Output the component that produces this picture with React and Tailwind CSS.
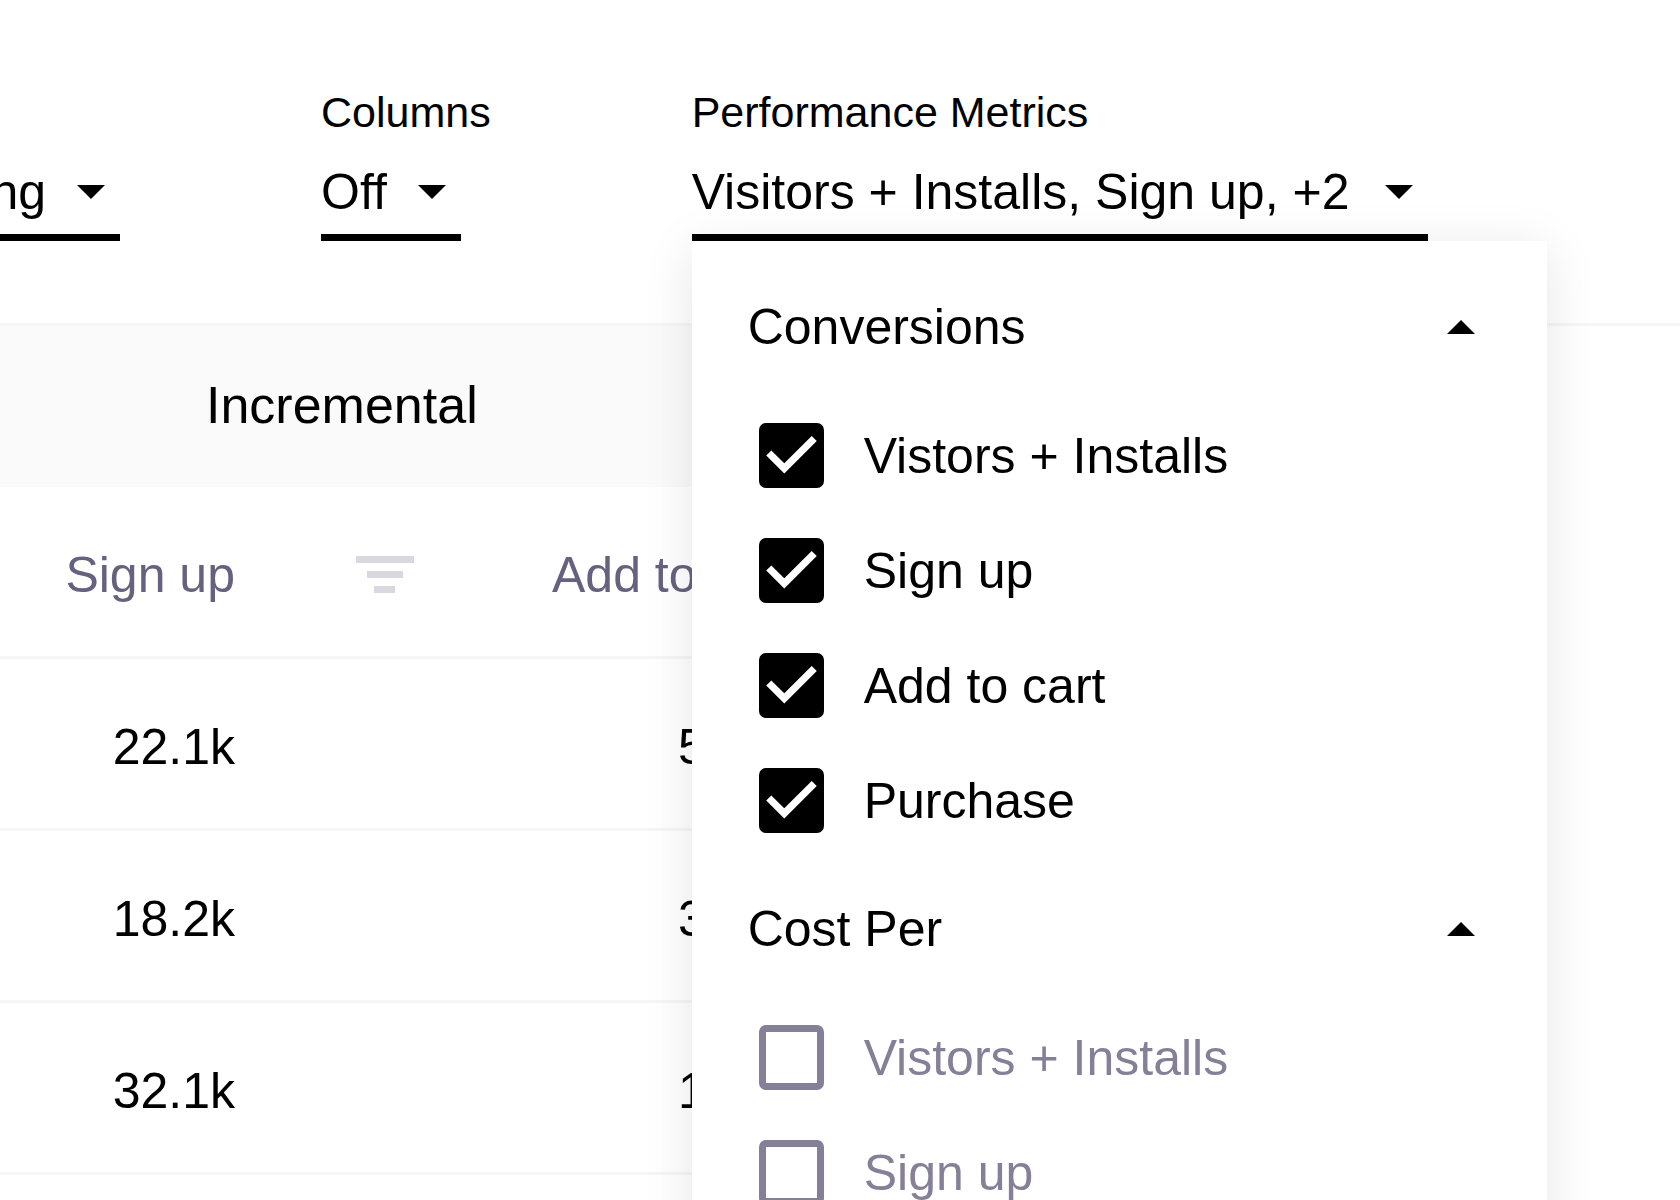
import { useState } from "react";

const METRICS = ["Vistors + Installs", "Sign up", "Add to cart", "Purchase"];

const ROWS = [
  ["22.1k", "5.12k"],
  ["18.2k", "3.24k"],
  ["32.1k", "12.1k"],
];

function Triangle({ up = false, className = "" }) {
  return (
    <svg
      width="28"
      height="14"
      viewBox="0 0 28 14"
      fill="currentColor"
      aria-hidden="true"
      className={`shrink-0 ${className}`}
    >
      <path d={up ? "M0 14 14 0 28 14Z" : "M0 0H28L14 14Z"} />
    </svg>
  );
}

function SelectField({ id, label, value }) {
  return (
    <div className="flex shrink-0 flex-col items-start">
      {label ? (
        <label htmlFor={id} className="mb-6 text-[43px] leading-[52px]">
          {label}
        </label>
      ) : (
        <span className="mb-6 h-[52px]" />
      )}
      <div className="grid items-center border-b-[7px] border-black pb-3">
        <select
          id={id}
          aria-label={label || "Attribution"}
          className="col-start-1 row-start-1 h-[60px] appearance-none bg-transparent pr-[74px] leading-[60px] outline-none [field-sizing:content]"
        >
          <option>{value}</option>
        </select>
        <Triangle className="pointer-events-none col-start-1 row-start-1 mr-[15px] justify-self-end" />
      </div>
    </div>
  );
}

function MetricCheckbox({ label, checked, onChange }) {
  return (
    <label
      className={`flex h-[115px] items-center gap-10 pl-[67px] ${
        checked ? "text-black" : "text-[#857f97]"
      }`}
    >
      <span className="grid shrink-0">
        <input
          type="checkbox"
          checked={checked}
          onChange={onChange}
          className="col-start-1 row-start-1 size-[65px] appearance-none rounded-[7px] border-[7px] border-current checked:bg-black"
        />
        {checked && (
          <svg
            viewBox="3 3 18 18"
            fill="white"
            aria-hidden="true"
            className="pointer-events-none col-start-1 row-start-1 size-[65px]"
          >
            <path d="M10 17l-5-5 1.41-1.41L10 14.17l7.59-7.59L19 8l-9 9z" />
          </svg>
        )}
      </span>
      {label}
    </label>
  );
}

function MetricSection({ title, initial }) {
  const [open, setOpen] = useState(true);
  const [picked, setPicked] = useState(initial);
  const toggle = (name) =>
    setPicked((now) =>
      now.includes(name) ? now.filter((n) => n !== name) : [...now, name]
    );

  return (
    <section>
      <button
        type="button"
        aria-expanded={open}
        onClick={() => setOpen(!open)}
        className="flex h-[142px] w-full items-center justify-between pr-[72px] pl-14"
      >
        {title}
        <Triangle up={open} />
      </button>
      {open &&
        METRICS.map((name) => (
          <MetricCheckbox
            key={name}
            label={name}
            checked={picked.includes(name)}
            onChange={() => toggle(name)}
          />
        ))}
    </section>
  );
}

function MetricsField() {
  const [open, setOpen] = useState(true);
  return (
    <div className="flex shrink-0 flex-col items-start">
      <span id="metrics-label" className="mb-6 text-[43px] leading-[52px]">
        Performance Metrics
      </span>
      <div className="relative">
        <button
          type="button"
          aria-labelledby="metrics-label metrics-value"
          aria-expanded={open}
          onClick={() => setOpen(!open)}
          className="flex items-center gap-9 border-b-[7px] border-black pr-[15px] pb-3 leading-[60px] whitespace-nowrap"
        >
          <span id="metrics-value">Visitors + Installs, Sign up, +2</span>
          <Triangle />
        </button>
        {open && (
          <div className="absolute top-full left-0 z-10 w-[855px] bg-white pt-[15px] shadow-[0_8px_48px_rgba(0,0,0,0.1)]">
            <MetricSection title="Conversions" initial={METRICS} />
            <MetricSection title="Cost Per" initial={[]} />
          </div>
        )}
      </div>
    </div>
  );
}

function FilterIcon() {
  return (
    <svg width="58" height="37" viewBox="0 0 58 37" fill="#d9d8df" aria-hidden="true">
      <path d="M0 0H58V7H0ZM11 15H47V22H11ZM18 30H39V37H18Z" />
    </svg>
  );
}

function ResultsTable() {
  return (
    <table className="table-fixed border-separate border-spacing-0 whitespace-nowrap">
      <colgroup>
        <col className="w-[414px]" />
        <col className="w-[500px]" />
      </colgroup>
      <thead>
        <tr>
          <th
            colSpan={2}
            className="h-[161px] bg-[#fafafa] p-0 pb-1 pl-[206px] text-left text-[52px] leading-[60px] font-normal"
          >
            Incremental
          </th>
        </tr>
        <tr className="text-[#676180]">
          <th className="h-[172px] border-b-[3px] border-[#f6f6f7] p-0 pt-1.5 text-right font-normal">
            <span className="flex items-center justify-end gap-[121px]">
              Sign up
              <button type="button" aria-label="Sort by sign up">
                <FilterIcon />
              </button>
            </span>
          </th>
          <th className="h-[172px] border-b-[3px] border-[#f6f6f7] p-0 pt-1.5 pl-[138px] text-left font-normal">
            Add to cart
          </th>
        </tr>
      </thead>
      <tbody>
        {ROWS.map(([signUp, cart]) => (
          <tr key={signUp}>
            <td className="h-[172px] border-b-[3px] border-[#f6f6f7] p-0 pt-1.5 pr-[179px] text-right">
              {signUp}
            </td>
            <td className="h-[172px] border-b-[3px] border-[#f6f6f7] p-0 pt-1.5 pl-[264px] text-left">
              {cart}
            </td>
          </tr>
        ))}
      </tbody>
    </table>
  );
}

export default function App() {
  return (
    <main className="h-screen w-full overflow-hidden bg-white font-['Liberation_Sans',Arial,sans-serif] text-[50px] leading-[60px] text-black">
      <div className="flex gap-[201px] border-b-[3px] border-[#f6f6f7] pt-[86px] pb-[82px]">
        <div className="flex w-[120px] shrink-0 justify-end">
          <SelectField id="attribution" value="ng" />
        </div>
        <SelectField id="columns" label="Columns" value="Off" />
        <MetricsField />
      </div>
      <ResultsTable />
    </main>
  );
}
